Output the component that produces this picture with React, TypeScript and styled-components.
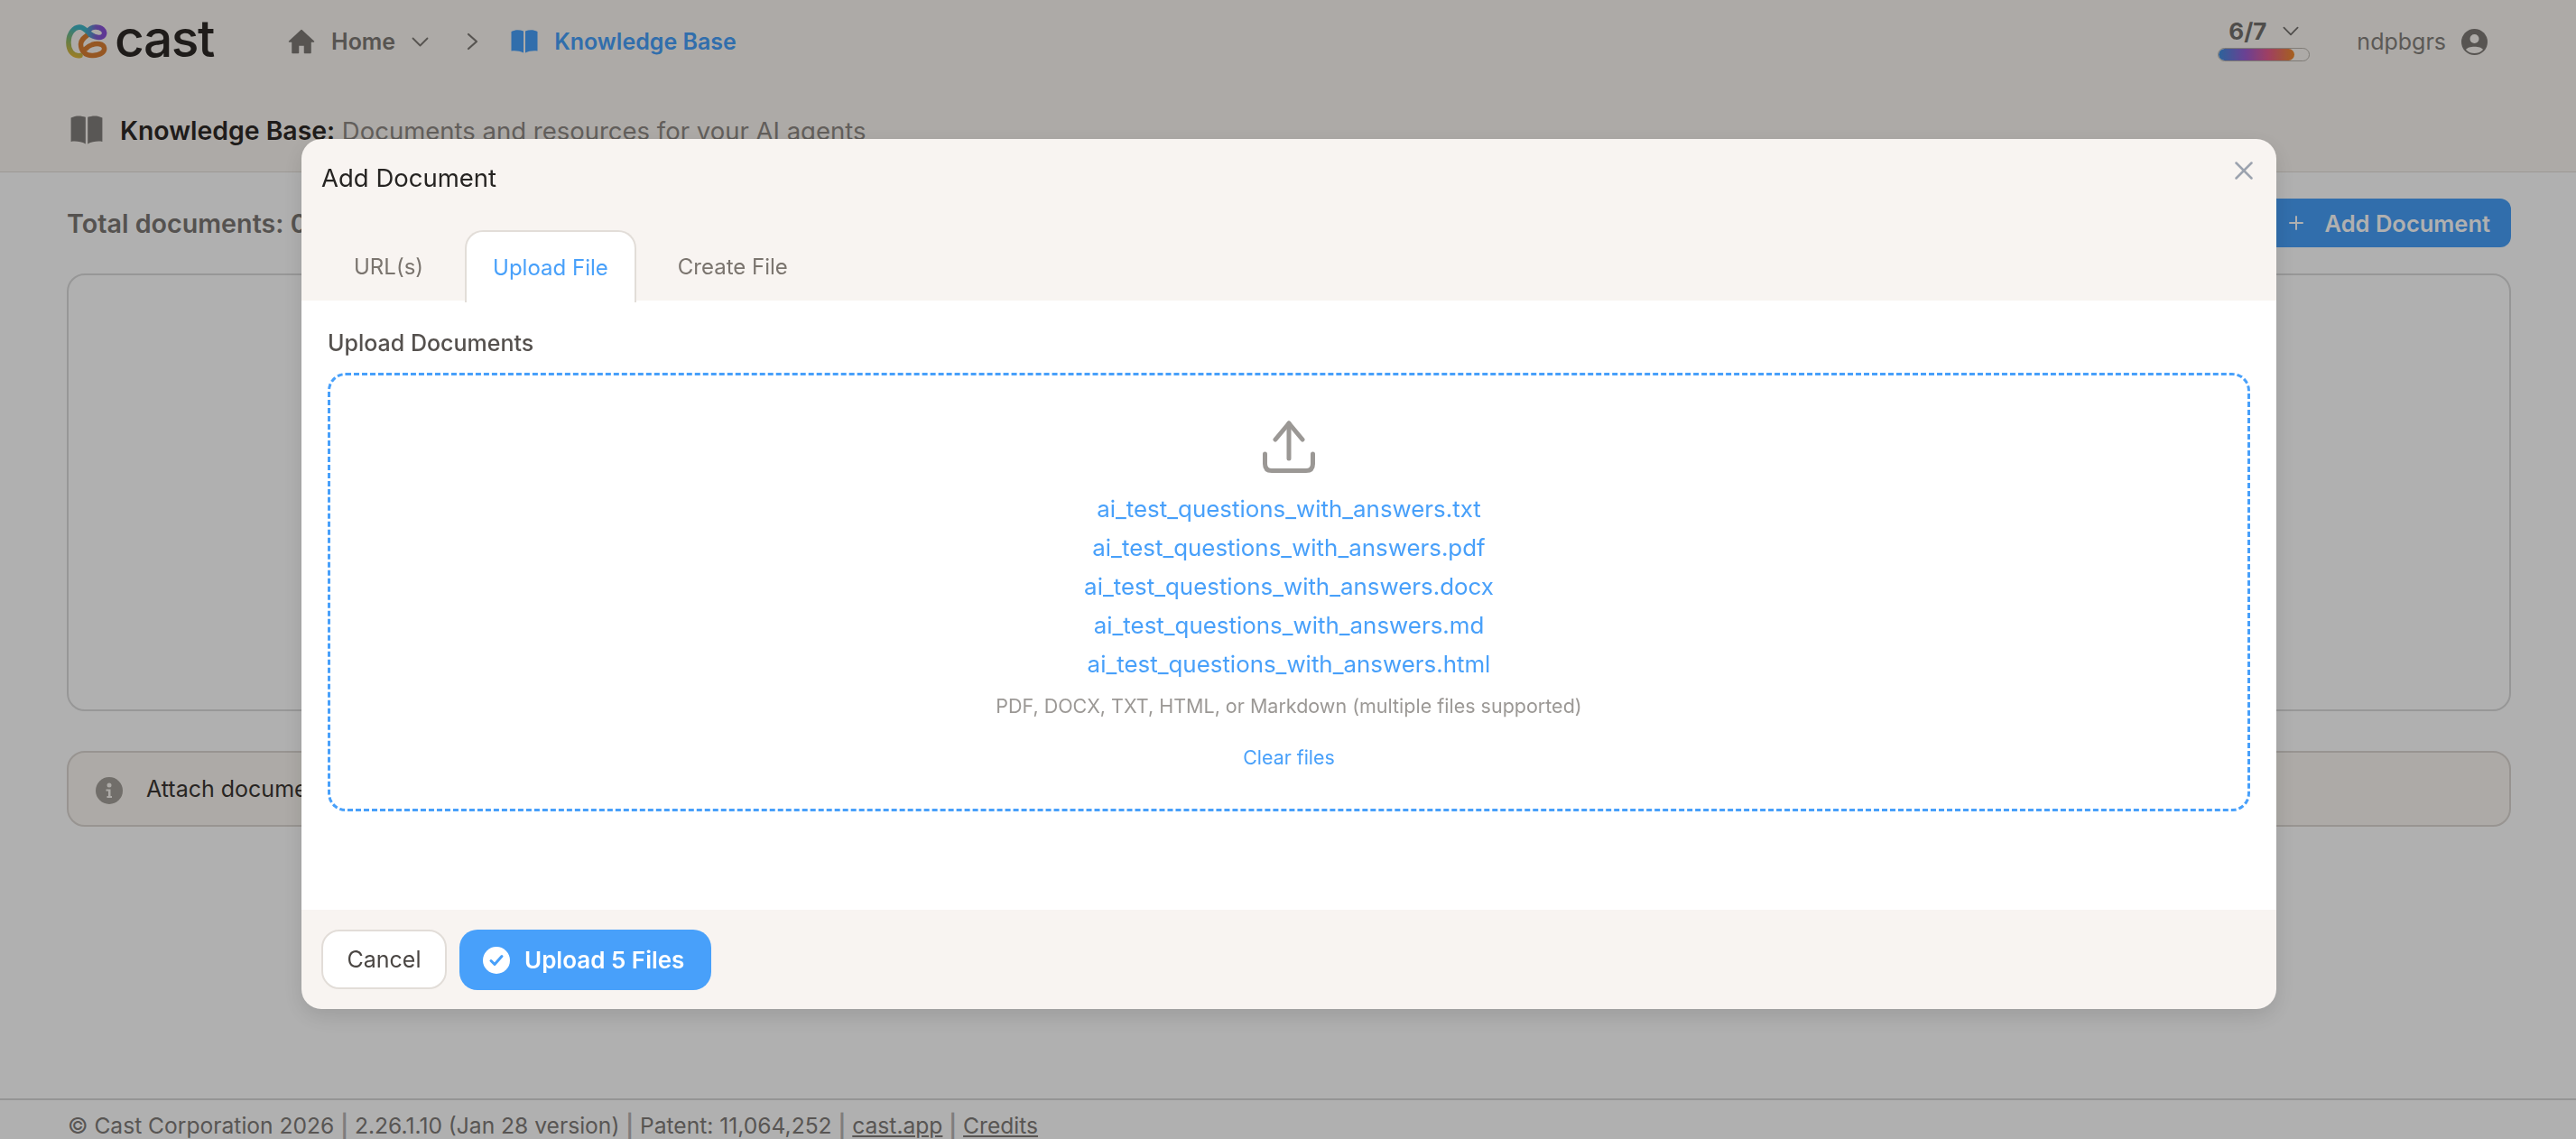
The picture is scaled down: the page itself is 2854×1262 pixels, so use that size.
import React from 'react';
import styled, { createGlobalStyle } from 'styled-components';
import { Plus, X } from 'lucide-react';

const files = [
  'ai_test_questions_with_answers.txt',
  'ai_test_questions_with_answers.pdf',
  'ai_test_questions_with_answers.docx',
  'ai_test_questions_with_answers.md',
  'ai_test_questions_with_answers.html',
];

const HomeIcon = () => (
  <svg width="30" height="28" viewBox="0 0 30 28" fill="currentColor" stroke="currentColor" strokeWidth="1.500" strokeLinejoin="round">
    <path d="M15 1.500 L28.500 14 L25 14 L25 26.500 L18.500 26.500 L18.500 18 L11.500 18 L11.500 26.500 L5 26.500 L5 14 L1.500 14 Z" />
  </svg>
);

const BookIcon = ({ width = 30, height = 26 }: { width?: number; height?: number }) => (
  <svg width={width} height={height} viewBox="0 0 30 26" fill="currentColor" preserveAspectRatio="none">
    <path d="M0.500 2 C5 -0.300 10 0 14 1.500 L14 25.500 C10 23.500 5 22.800 0.500 23.500 Z" />
    <path d="M29.500 2 C25 -0.300 20 0 16 1.500 L16 25.500 C20 23.500 25 22.800 29.500 23.500 Z" />
  </svg>
);

const ChevronDownIcon = ({ width = 19 }: { width?: number }) => (
  <svg width={width} height="11" viewBox="0 0 19 11" fill="none" stroke="currentColor" strokeWidth="1.800" strokeLinecap="round" strokeLinejoin="round">
    <path d="M1.500 1.500 L9.500 9.500 L17.500 1.500" />
  </svg>
);

const ChevronRightIcon = () => (
  <svg width="13" height="20" viewBox="0 0 13 20" fill="none" stroke="currentColor" strokeWidth="2.200" strokeLinecap="round" strokeLinejoin="round">
    <path d="M2 2 L11 10 L2 18" />
  </svg>
);

const UserIcon = () => (
  <svg width="29" height="29" viewBox="0 0 29 29">
    <circle cx="14.500" cy="14.500" r="14.500" fill="currentColor" />
    <circle cx="14.500" cy="11" r="5" fill="#fbf7f2" />
    <path d="M5 23 C7 18.500 22 18.500 24 23 C21 26 18 27 14.500 27 C11 27 8 26 5 23 Z" fill="#fbf7f2" />
  </svg>
);

const InfoIcon = () => (
  <svg width="30" height="30" viewBox="0 0 30 30">
    <circle cx="15" cy="15" r="15" fill="currentColor" />
    <circle cx="15" cy="9" r="2.500" fill="#fbf7f2" />
    <path d="M11.500 13.500 H16.500 V21 H18 V23 H12.500 V21 H14 V15.500 H11.500 Z" fill="#fbf7f2" />
  </svg>
);

const CheckIcon = () => (
  <svg width="30" height="30" viewBox="0 0 30 30">
    <circle cx="15" cy="15" r="15" fill="#fff" />
    <path d="M9 15.500 L13 19.500 L21 10.500" fill="none" stroke="#48a0fa" strokeWidth="3" strokeLinecap="round" strokeLinejoin="round" />
  </svg>
);

const UploadIcon = () => (
  <svg width="58" height="58" viewBox="0 0 58 58" fill="none" stroke="currentColor" strokeWidth="5" strokeLinecap="round" strokeLinejoin="round">
    <path d="M29 3 V42" />
    <path d="M14 21 L29 3 L44 21" />
    <path d="M2.500 37 V48 C2.500 53 5 55.500 10 55.500 H48 C53 55.500 55.500 53 55.500 48 V37" />
  </svg>
);

const LogoMark = () => (
  <svg width="46" height="38" viewBox="0 0 46 38" fill="none" strokeWidth="5.500" strokeLinecap="round">
    <defs>
      <linearGradient id="logoLeft" x1="0" y1="1" x2="0.300" y2="0">
        <stop offset="0" stopColor="#e6b534" />
        <stop offset="0.500" stopColor="#8cb86a" />
        <stop offset="1" stopColor="#3fb6c6" />
      </linearGradient>
      <linearGradient id="logoTop" x1="0" y1="0.500" x2="1" y2="0.500">
        <stop offset="0" stopColor="#4aa6c9" />
        <stop offset="0.500" stopColor="#7f5fd0" />
        <stop offset="1" stopColor="#8b4fd8" />
      </linearGradient>
    </defs>
    <path d="M25 11 C21 14 17 16 16.500 22 C16.500 30 22 35 30 34.500 C38 34 43.500 31 42.500 26 C41.500 21 34 21 29 22.500 C26 23.500 24 25 22 27" stroke="#d97f34" />
    <path d="M16 34.500 C7 36 2.500 28 3 19 C3.500 9 9 3.500 15 3 C21 3 24 10 30 12.500" stroke="url(#logoLeft)" />
    <path d="M27 11.500 C33 14.500 39 16.500 42 12 C44.500 7 39 3 33 3 C29 3 26 5 24.500 8" stroke="url(#logoTop)" />
  </svg>
);

const App = () => (
  <>
    <GlobalStyle />
    <Page>
      <TopArea>
        <NavBar>
          <Logo>
            <LogoMark />
            <LogoWord>cast</LogoWord>
          </Logo>
          <Crumbs>
            <HomeLink>
              <HomeIcon />
              <span>Home</span>
              <ChevronDownIcon />
            </HomeLink>
            <CrumbArrow>
              <ChevronRightIcon />
            </CrumbArrow>
            <CurrentCrumb>
              <BookIcon />
              <span>Knowledge Base</span>
            </CurrentCrumb>
          </Crumbs>
          <NavRight>
            <Usage>
              <UsageTop>
                <span>6/7</span>
                <ChevronDownIcon width={18} />
              </UsageTop>
              <UsageTrack>
                <UsageFill />
              </UsageTrack>
            </Usage>
            <UserName>ndpbgrs</UserName>
            <UserIcon />
          </NavRight>
        </NavBar>
        <SubHeader>
          <BookIcon width={36} height={32} />
          <SubTitle>
            <b>Knowledge Base:</b> Documents and resources for your AI agents
          </SubTitle>
        </SubHeader>
      </TopArea>

      <Content>
        <ContentHead>
          <TotalLabel>Total documents: 0</TotalLabel>
          <AddButton>
            <Plus size={24} strokeWidth={2} />
            Add Document
          </AddButton>
        </ContentHead>
        <EmptyBox />
        <InfoBar>
          <InfoIcon />
          <span>Attach documents to your agents</span>
        </InfoBar>
      </Content>

      <Footer>
        © Cast Corporation 2026 <Pipe>|</Pipe> 2.26.1.10 (Jan 28 version) <Pipe>|</Pipe> Patent: 11,064,252 <Pipe>|</Pipe>{' '}
        <u>cast.app</u> <Pipe>|</Pipe> <u>Credits</u>
      </Footer>
    </Page>

    <Overlay>
      <Modal>
        <ModalHead>
          <ModalTitle>Add Document</ModalTitle>
          <CloseButton>
            <X size={34} strokeWidth={1.75} />
          </CloseButton>
        </ModalHead>
        <Tabs>
          <Tab>URL(s)</Tab>
          <Tab $active>Upload File</Tab>
          <Tab>Create File</Tab>
        </Tabs>
        <ModalBody>
          <FieldLabel>Upload Documents</FieldLabel>
          <DropZone>
            <UploadGlyph>
              <UploadIcon />
            </UploadGlyph>
            <FileList>
              {files.map((name) => (
                <FileName key={name}>{name}</FileName>
              ))}
            </FileList>
            <Hint>PDF, DOCX, TXT, HTML, or Markdown (multiple files supported)</Hint>
            <ClearFiles>Clear files</ClearFiles>
          </DropZone>
        </ModalBody>
        <ModalFooter>
          <CancelButton>Cancel</CancelButton>
          <UploadButton>
            <CheckIcon />
            Upload 5 Files
          </UploadButton>
        </ModalFooter>
      </Modal>
    </Overlay>
  </>
);

const GlobalStyle = createGlobalStyle`
  html, body {
    margin: 0;
    height: 100%;
    overflow: hidden;
    background: #fff;
  }

  body {
    font-family: "Inter", "Liberation Sans", sans-serif;
    color: #33302e;
  }

  * {
    box-sizing: border-box;
  }
`;

const Page = styled.div`
  height: 1262px;
  display: flex;
  flex-direction: column;
  overflow: hidden;
`;

const TopArea = styled.header`
  height: 191px;
  flex-shrink: 0;
  background: #fbf7f2;
  border-bottom: 1px solid #e4ded8;
  padding: 0 98px 0 73px;
`;

const NavBar = styled.div`
  height: 92px;
  display: flex;
  align-items: center;
`;

const Logo = styled.div`
  width: 246px;
  display: flex;
  align-items: center;
  gap: 8px;
`;

const LogoWord = styled.span`
  font-size: 57px;
  font-weight: 500;
  line-height: 1;
  letter-spacing: -1.500px;
  color: #2d2926;
  margin-top: -8px;
`;

const Crumbs = styled.nav`
  display: flex;
  align-items: center;
`;

const HomeLink = styled.div`
  display: flex;
  align-items: center;
  gap: 18px;
  font-size: 25px;
  font-weight: 600;
  color: #7e7a76;
`;

const CrumbArrow = styled.div`
  display: flex;
  margin: 0 36px 0 42px;
  color: #7e7a76;
`;

const CurrentCrumb = styled.div`
  display: flex;
  align-items: center;
  gap: 18px;
  font-size: 25px;
  font-weight: 600;
  color: #48a0fa;
`;

const NavRight = styled.div`
  margin-left: auto;
  display: flex;
  align-items: center;
  color: #7e7a76;
`;

const Usage = styled.div`
  width: 102px;
  margin-right: 52px;
  display: flex;
  flex-direction: column;
  gap: 2px;
  margin-top: -6px;
`;

const UsageTop = styled.div`
  display: flex;
  align-items: center;
  gap: 18px;
  padding-left: 12px;
  font-size: 26px;
  font-weight: 700;
  line-height: 32px;
  color: #73706d;
`;

const UsageTrack = styled.div`
  height: 15px;
  border: 1px solid #b8b2ac;
  border-radius: 8px;
  overflow: hidden;
`;

const UsageFill = styled.div`
  width: 84%;
  height: 100%;
  border-radius: 8px;
  background: linear-gradient(90deg, #3f90e0, #9a5fd6 35%, #e65c90 65%, #f08c2c);
`;

const UserName = styled.span`
  font-size: 25px;
  margin-right: 17px;
  color: #85817d;
`;

const SubHeader = styled.div`
  display: flex;
  align-items: center;
  gap: 19px;
  height: 44px;
  margin-top: 30px;
  padding-left: 5px;
  color: #827e7b;
`;

const SubTitle = styled.div`
  font-size: 27.500px;
  color: #8e8984;
  white-space: nowrap;
  b {
    font-size: 28.400px;
    font-weight: 600;
    color: #2d2926;
  }
`;

const Content = styled.main`
  flex: 1;
  padding: 29px 72px 0 74px;
  display: flex;
  flex-direction: column;
`;

const ContentHead = styled.div`
  display: flex;
  align-items: center;
  justify-content: space-between;
  height: 54px;
`;

const TotalLabel = styled.div`
  font-size: 28.700px;
  font-weight: 600;
  color: #7c7874;
`;

const AddButton = styled.button`
  height: 54px;
  padding: 0 23px;
  display: flex;
  align-items: center;
  gap: 20px;
  border: none;
  border-radius: 12px;
  background: #48a0fa;
  color: #fff;
  font-family: inherit;
  font-size: 25.500px;
  font-weight: 600;
`;

const EmptyBox = styled.div`
  height: 485px;
  margin-top: 29px;
  border: 2px solid #dbdbdb;
  border-radius: 20px;
`;

const InfoBar = styled.div`
  height: 84px;
  margin-top: 44px;
  padding: 0 30px;
  display: flex;
  align-items: center;
  gap: 26px;
  background: #fbf7f2;
  border: 2px solid #dcd7d2;
  border-radius: 20px;
  font-size: 25px;
  color: #3a3633;
  svg {
    color: #a4a09a;
    margin-top: 4px;
  }
`;

const Footer = styled.footer`
  flex-shrink: 0;
  height: 45px;
  padding: 14px 0 0 75px;
  border-top: 2px solid #d8d8d8;
  font-size: 24.600px;
  line-height: 28px;
  color: #807c79;
  white-space: nowrap;
`;

const Pipe = styled.span`
  color: #b8b6b4;
  font-weight: 600;
`;

const Overlay = styled.div`
  position: fixed;
  inset: 0;
  background: rgba(0, 0, 0, 0.31);
  display: flex;
  justify-content: center;
  align-items: flex-start;
  padding-top: 154px;
`;

const Modal = styled.div`
  width: 2188px;
  height: 964px;
  margin-left: 2px;
  position: relative;
  display: flex;
  flex-direction: column;
  overflow: hidden;
  background: #f8f4f1;
  border-radius: 22px;
  box-shadow: 0 8px 24px rgba(0, 0, 0, 0.12);
`;

const ModalHead = styled.div`
  height: 101px;
  flex-shrink: 0;
  display: flex;
  align-items: center;
  padding: 0 22px 16px;
`;

const ModalTitle = styled.div`
  font-size: 27.500px;
  color: #262422;
`;

const CloseButton = styled.button`
  position: absolute;
  top: 18px;
  right: 19px;
  padding: 0;
  border: none;
  background: none;
  color: #9ca3af;
  display: flex;
`;

const Tabs = styled.div`
  height: 78px;
  flex-shrink: 0;
  padding-left: 12px;
  display: flex;
  position: relative;
  z-index: 1;
`;

const Tab = styled.div<{ $active?: boolean }>`
  height: 80px;
  padding: 0 ${(p) => (p.$active ? '29px' : '46px')};
  display: flex;
  align-items: center;
  font-size: 24px;
  color: ${(p) => (p.$active ? '#48a0fa' : '#7a746e')};
  background: ${(p) => (p.$active ? '#fff' : 'transparent')};
  border: ${(p) => (p.$active ? '2px solid #e2ddd8' : 'none')};
  border-bottom: none;
  border-radius: 20px 20px 0 0;
`;

const ModalBody = styled.div`
  flex: 1;
  background: #fff;
  padding: 30px 29px 0 29px;
`;

const FieldLabel = styled.div`
  font-size: 25px;
  font-weight: 500;
  line-height: 34px;
  color: #55514e;
`;

const DropZone = styled.div`
  height: 486px;
  margin-top: 16px;
  padding-top: 50px;
  display: flex;
  flex-direction: column;
  align-items: center;
  border: 3px dashed #48a0fa;
  border-radius: 20px;
`;

const UploadGlyph = styled.div`
  display: flex;
  color: #9b9895;
  height: 58px;
`;

const FileList = styled.div`
  margin-top: 18px;
  display: flex;
  flex-direction: column;
  align-items: center;
`;

const FileName = styled.div`
  font-size: 25.900px;
  line-height: 43.100px;
  color: #48a0fa;
`;

const Hint = styled.div`
  margin-top: 10px;
  font-size: 21.500px;
  line-height: 30px;
  color: #9b9895;
`;

const ClearFiles = styled.div`
  margin-top: 28px;
  font-size: 21.400px;
  line-height: 28px;
  color: #48a0fa;
`;

const ModalFooter = styled.div`
  height: 110px;
  flex-shrink: 0;
  padding: 22px 22px 0;
  display: flex;
  align-items: flex-start;
  gap: 14px;
`;

const CancelButton = styled.button`
  width: 139px;
  height: 66px;
  padding: 0;
  background: #fff;
  border: 2px solid #e2ddd8;
  border-radius: 20px;
  font-family: inherit;
  font-size: 25px;
  color: #4a4643;
`;

const UploadButton = styled.button`
  width: 279px;
  height: 67px;
  padding: 0 0 0 26px;
  display: flex;
  align-items: center;
  gap: 16px;
  background: #48a0fa;
  border: none;
  border-radius: 20px;
  font-family: inherit;
  font-size: 26px;
  font-weight: 600;
  color: #fff;
`;

export default App;
